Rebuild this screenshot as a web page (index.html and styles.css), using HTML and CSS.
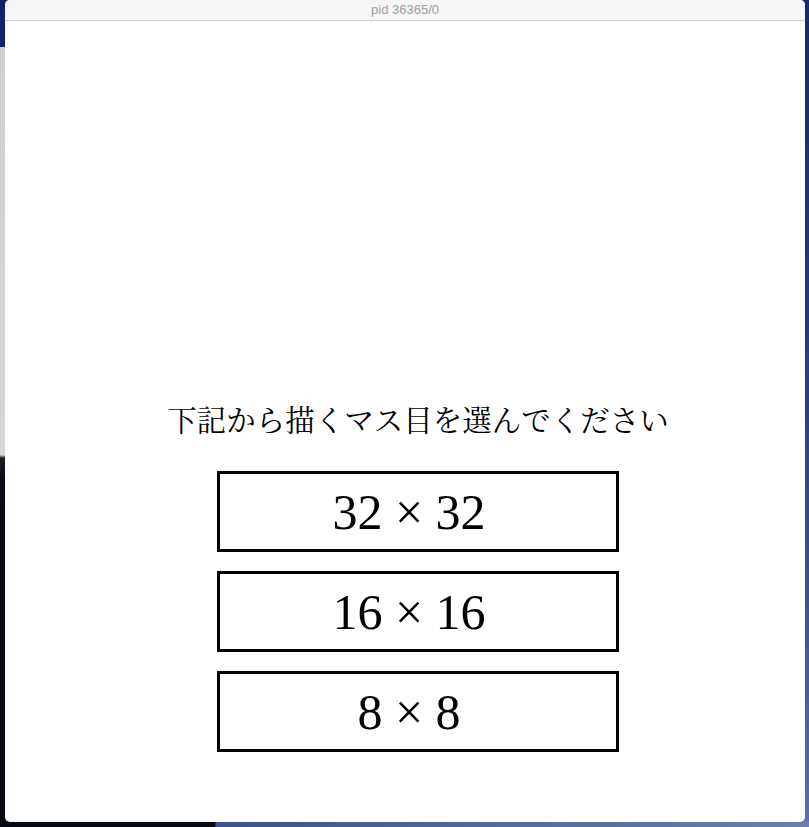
FILE: index.html
```html
<!DOCTYPE html>
<html lang="ja">
<head>
<meta charset="utf-8">
<title>pid 36365/0</title>
<link rel="stylesheet" href="styles.css">
</head>
<body>
<div class="desktop">
  <div class="window">
    <div class="titlebar">pid 36365/0</div>
    <div class="content">
      <div class="prompt">下記から描くマス目を選んでください</div>
      <div class="choices">
        <button class="choice">32 × 32</button>
        <button class="choice">16 × 16</button>
        <button class="choice">8 × 8</button>
      </div>
    </div>
  </div>
</div>
</body>
</html>
```

FILE: styles.css
```css
html, body {
  margin: 0;
  padding: 0;
  width: 809px;
  height: 827px;
  overflow: hidden;
}

body {
  background:
    linear-gradient(to bottom, #14206a 0px, #14206a 47px, #cfcfcf 47px, #d6d6d6 455px, #1c1c1c 458px, #0a0d18 480px, #070a14 827px) left top / 6px 827px no-repeat,
    linear-gradient(to right, #070a14 0px, #070a14 215px, #3c5290 216px, #6a80b0 809px) left bottom / 809px 6px no-repeat,
    linear-gradient(to bottom, #17276e 0%, #23388a 40%, #3a4f92 70%, #5a6ea8 100%);
}

.desktop {
  display: flex;
  padding: 0 4px 5px 5px;
  height: 822px;
}

.window {
  flex: 1;
  display: flex;
  flex-direction: column;
  background: #ffffff;
  border-radius: 5px;
  overflow: hidden;
}

.titlebar {
  height: 20px;
  flex: none;
  background: #f6f6f6;
  border-bottom: 1px solid #d2d2d2;
  color: #a0a0a0;
  font-family: "Liberation Sans", "DejaVu Sans", sans-serif;
  font-size: 13px;
  line-height: 20px;
  text-align: center;
}

.content {
  flex: 1;
  display: flex;
  flex-direction: column;
  align-items: center;
  justify-content: flex-end;
  padding: 0 0 70px 26px;
}

.prompt {
  font-family: "Liberation Serif", "Noto Serif CJK JP", "Noto Sans CJK JP", serif;
  font-size: 29.5px;
  line-height: 36px;
  color: #000;
  margin-bottom: 32px;
}

.choices {
  display: flex;
  flex-direction: column;
  gap: 19px;
}

.choice {
  width: 402px;
  height: 81px;
  box-sizing: border-box;
  border: 3px solid #000;
  background: #fff;
  color: #000;
  font-family: "Liberation Serif", "Times New Roman", serif;
  font-size: 50px;
  line-height: 1;
  padding: 0 18px 0 0;
  margin: 0;
  display: flex;
  align-items: center;
  justify-content: center;
  border-radius: 0;
}
```
